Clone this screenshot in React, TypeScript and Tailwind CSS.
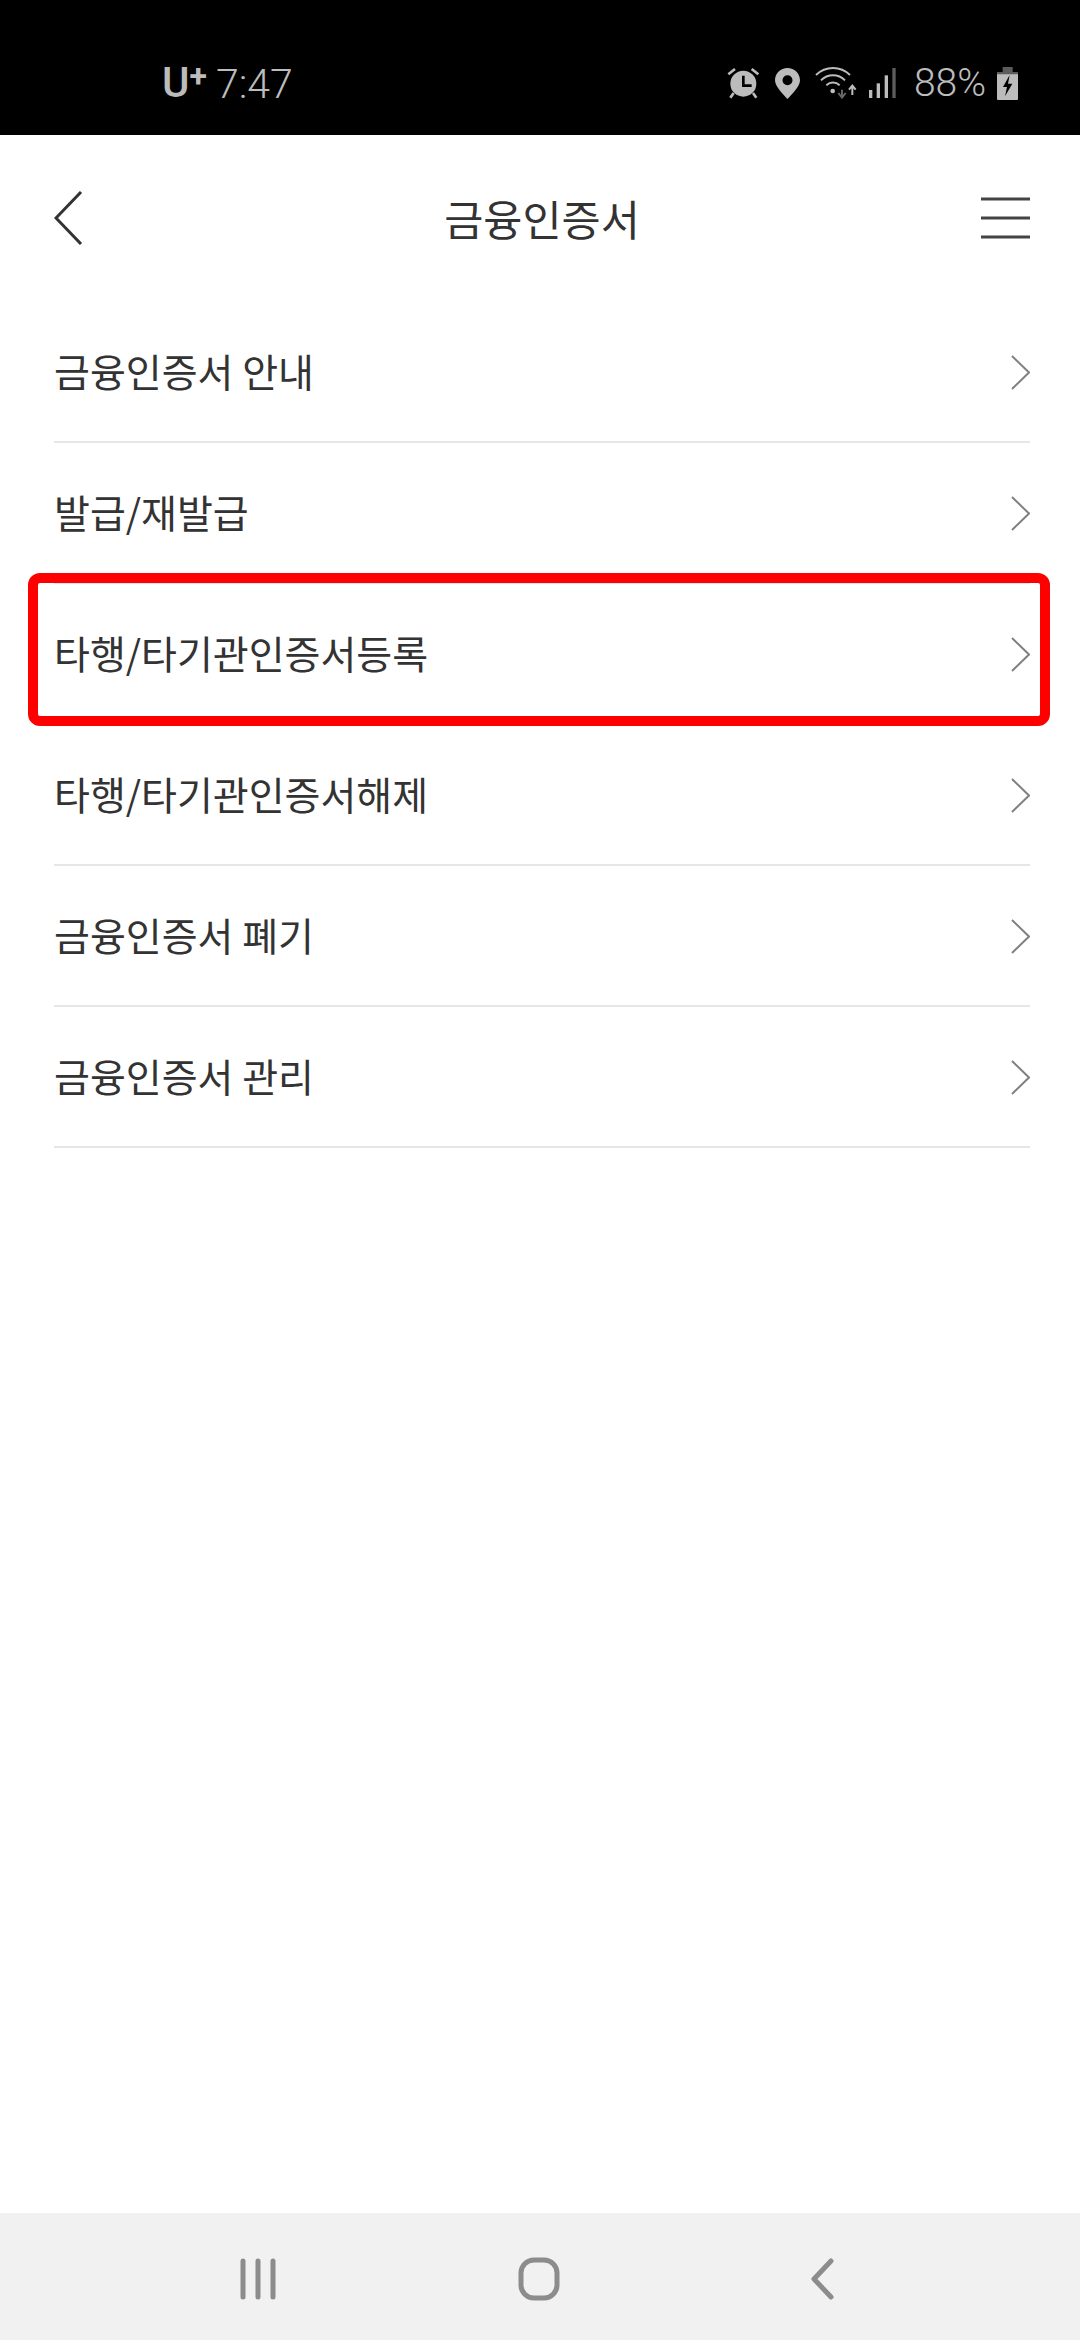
const STATUS = "#bcbcbc";

const rows = [
  "금융인증서 안내",
  "발급/재발급",
  "타행/타기관인증서등록",
  "타행/타기관인증서해제",
  "금융인증서 폐기",
  "금융인증서 관리",
];

function AlarmIcon() {
  return (
    <svg width="33" height="32" viewBox="0 0 99 96">
      <circle cx="49" cy="50" r="39" fill={STATUS} />
      <path d="M4 22 L24 6 M94 22 L74 6" stroke={STATUS} strokeWidth="8" />
      <path d="M20 78 L10 92 M78 78 L88 92" stroke={STATUS} strokeWidth="8" />
      <path d="M49 26 V56 H74" stroke="#000" strokeWidth="8" fill="none" />
    </svg>
  );
}

function PinIcon() {
  return (
    <svg width="25" height="31" viewBox="0 0 75 93">
      <path
        fillRule="evenodd"
        fill={STATUS}
        d="M37.5 0 C58 0 75 16 75 37 C75 56 50 80 37.5 93 C25 80 0 56 0 37 C0 16 17 0 37.5 0 Z M37.5 22 A15 15 0 1 0 37.5 52 A15 15 0 1 0 37.5 22 Z"
      />
    </svg>
  );
}

function WifiIcon() {
  return (
    <svg width="42" height="33" viewBox="0 0 126 99">
      <path d="M3 24 C32 -4 76 -4 105 24" stroke={STATUS} strokeWidth="6" fill="none" />
      <path d="M18 40 C38 20 70 20 90 40" stroke={STATUS} strokeWidth="6" fill="none" />
      <path d="M34 55 C46 44 62 44 74 55" stroke={STATUS} strokeWidth="6" fill="none" />
      <circle cx="53" cy="72" r="7" fill={STATUS} />
      <path d="M81 68 V88 M70 78 L81 92 L92 78" stroke="#666" strokeWidth="6" fill="none" />
      <path d="M112 84 V60 M102 68 L112 56 L122 68" stroke={STATUS} strokeWidth="6" fill="none" />
    </svg>
  );
}

function SignalIcon() {
  return (
    <svg width="27" height="30" viewBox="0 0 81 90">
      <rect x="0" y="66" width="10" height="24" fill={STATUS} />
      <rect x="23" y="46" width="10" height="44" fill={STATUS} />
      <rect x="47" y="22" width="10" height="68" fill={STATUS} />
      <rect x="70" y="0" width="10" height="90" fill="#5c5c5c" />
    </svg>
  );
}

function BatteryIcon() {
  return (
    <svg width="21" height="33" viewBox="0 0 63 99">
      <rect x="0" y="15" width="63" height="84" rx="3" fill={STATUS} />
      <path d="M0 15 H63 V22 H0 Z M17 0 H47 V15 H17 Z" fill="#5c5c5c" />
      <path d="M38 24 L18 60 H30 L24 88 L46 50 H33 Z" fill="#000" />
    </svg>
  );
}

function BackIcon() {
  return (
    <svg width="29" height="54" viewBox="0 0 29 54" className="justify-self-start">
      <path d="M27 1 L2 27 L27 53" stroke="#333" strokeWidth="3" fill="none" />
    </svg>
  );
}

function MenuIcon() {
  return (
    <svg width="49" height="42" viewBox="0 0 49 42" className="justify-self-end">
      <path d="M0 2 H49 M0 21 H49 M0 40 H49" stroke="#444" strokeWidth="3" />
    </svg>
  );
}

function RowChevron() {
  return (
    <svg width="19" height="35" viewBox="0 0 19 35" className="mt-[4px]">
      <path d="M1 1 L18 17.5 L1 34" stroke="#808080" strokeWidth="2" fill="none" />
    </svg>
  );
}

export default function App() {
  return (
    <div
      className="flex h-[2340px] w-[1080px] flex-col bg-white"
      style={{ fontFamily: '"Noto Sans CJK KR", "Noto Sans", sans-serif' }}
    >
      {/* Status bar */}
      <div
        className="flex h-[135px] items-start justify-between bg-black pt-[65px] pr-[62px] pl-[162px] text-[#bcbcbc]"
        style={{ fontFamily: "Roboto, sans-serif" }}
      >
        <div className="flex items-center">
          <span className="relative text-[42px] leading-[36px] font-medium">
            U<span className="relative -top-[10px] text-[32px] leading-none font-bold">+</span>
          </span>
          <span className="ml-[9px] text-[41px] leading-[36px] font-light">7:47</span>
        </div>
        <div className="flex items-center">
          <AlarmIcon />
          <span className="ml-[15px]">
            <PinIcon />
          </span>
          <span className="ml-[15px]">
            <WifiIcon />
          </span>
          <span className="ml-[12px]">
            <SignalIcon />
          </span>
          <span className="ml-[18px] text-[39px] leading-[36px] font-light">88%</span>
          <span className="ml-[11px]">
            <BatteryIcon />
          </span>
        </div>
      </div>

      {/* Header */}
      <div className="grid h-[167px] grid-cols-[1fr_auto_1fr] items-center pr-[50px] pb-[1px] pl-[54px]">
        <BackIcon />
        <h1 className="text-[42.5px] font-normal text-[#333]">금융인증서</h1>
        <MenuIcon />
      </div>

      {/* Menu list */}
      <div className="mr-[50px] ml-[54px] flex-1">
        {rows.map((label, i) => (
          <div
            key={label}
            className="relative flex h-[141px] items-center justify-between border-b-2 border-[#e6e6e6] pb-[3px] text-[39px] text-[#333]"
          >
            <span>{label}</span>
            <RowChevron />
            {i === 2 && (
              <div className="absolute -top-[11px] -right-[20px] -bottom-[3px] -left-[26px] z-10 rounded-[12px] border-[10px] border-[#ff0000]" />
            )}
          </div>
        ))}
      </div>

      {/* Navigation bar */}
      <div className="flex h-[127px] items-center justify-between bg-[#f1f1f1] pt-[5px] pr-[246px] pl-[239px]">
        <svg width="38" height="42" viewBox="0 0 38 42">
          <path d="M4 3 V39 M19 3 V39 M34 3 V39" stroke="#8c8c8c" strokeWidth="5" strokeLinecap="round" />
        </svg>
        <svg width="42" height="44" viewBox="0 0 42 44" className="mr-[10px]">
          <rect x="3" y="3" width="36" height="38" rx="13" stroke="#8c8c8c" strokeWidth="5" fill="none" />
        </svg>
        <svg width="23" height="42" viewBox="0 0 23 42">
          <path d="M20 3 L3 21 L20 39" stroke="#8c8c8c" strokeWidth="5" strokeLinecap="round" strokeLinejoin="round" fill="none" />
        </svg>
      </div>
    </div>
  );
}
